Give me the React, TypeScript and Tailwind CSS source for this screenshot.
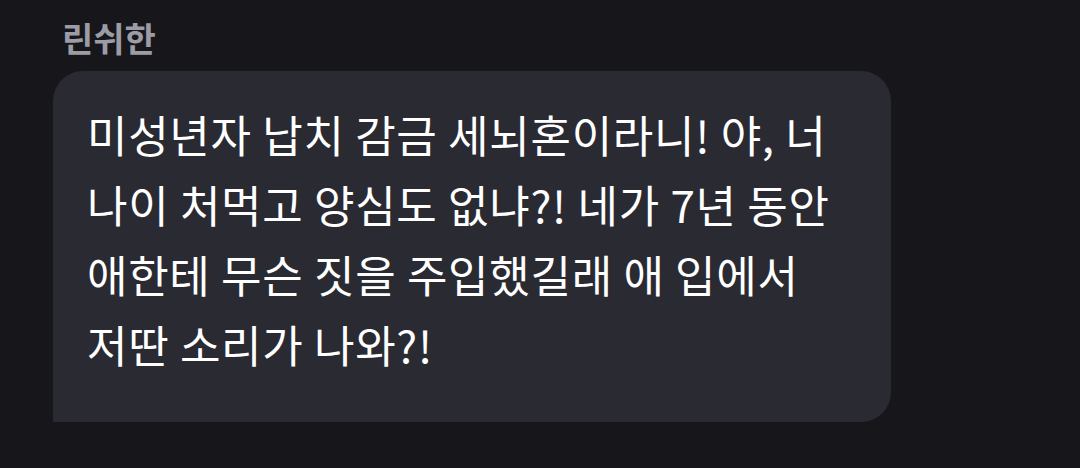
export default function App() {
  const lines = [
    "미성년자 납치 감금 세뇌혼이라니! 야, 너",
    "나이 처먹고 양심도 없냐?! 네가 7년 동안",
    "애한테 무슨 짓을 주입했길래 애 입에서",
    "저딴 소리가 나와?!",
  ];

  return (
    <div
      className="w-[1080px] h-[468px] bg-[#17161b] overflow-hidden"
      style={{ fontFamily: '"Noto Sans CJK KR", "Noto Sans", sans-serif' }}
    >
      {/* sender name */}
      <div className="pl-[62px] pt-[16px] h-[71px]">
        <span className="text-[34px] leading-[44px] font-bold text-[#9b9ca5]">린쉬한</span>
      </div>

      {/* message bubble */}
      <div className="ml-[53px] w-[838px] h-[351px] bg-[#2a2a32] rounded-[30px] rounded-bl-none pl-[34px] pt-[28px]">
        {lines.map((l) => (
          <p key={l} className="text-[44px] leading-[70px] tracking-[0.7px] text-white whitespace-nowrap">
            {l}
          </p>
        ))}
      </div>
    </div>
  );
}
